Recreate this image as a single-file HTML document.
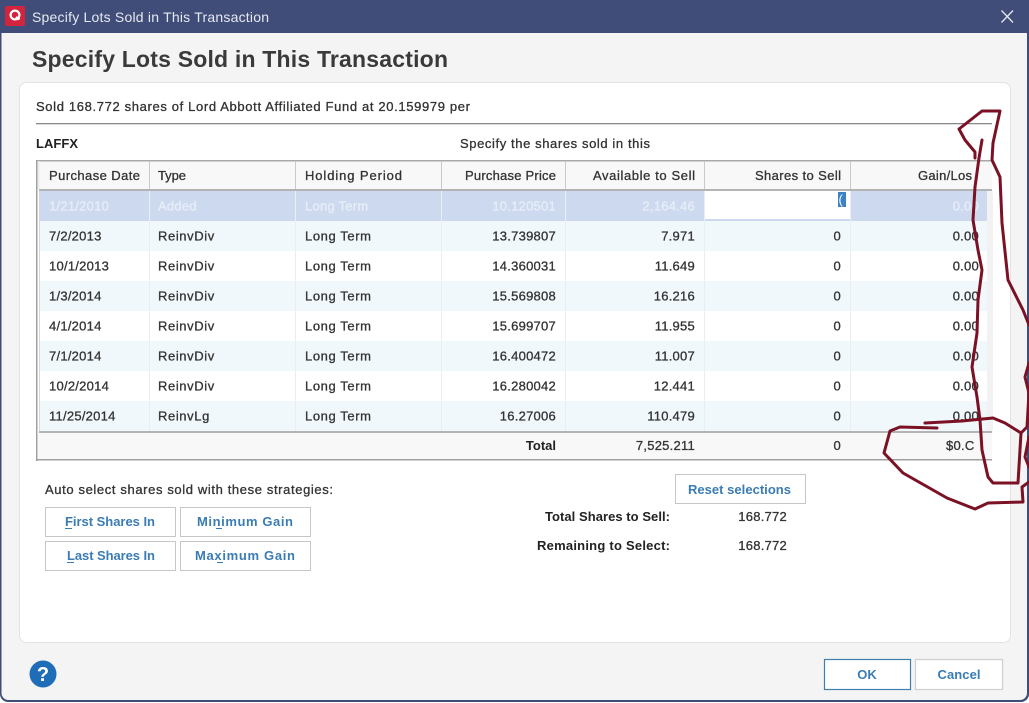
<!DOCTYPE html>
<html>
<head>
<meta charset="utf-8">
<title>Specify Lots Sold in This Transaction</title>
<style>
html,body{margin:0;padding:0;background:#fff;}
svg{display:block;font-family:"Liberation Sans",sans-serif;font-size:13px;}
.soft{filter:blur(.3px);}
.t{fill:#333;stroke:#333;stroke-width:.3px;letter-spacing:.25px;}
.m{letter-spacing:.6px;}
.h{fill:#333;stroke:#333;stroke-width:.3px;}
.e{text-anchor:end;}
.w{fill:#e6edf7;stroke:#e6edf7;stroke-width:.4px;letter-spacing:.25px;}
.b{fill:#3a7cb4;font-weight:bold;}
.k{font-weight:bold;fill:#222;}
.sep{stroke:#e9eef2;stroke-width:1;}
.hs{stroke:#c9c9c9;stroke-width:1;}
.btn{fill:#fff;stroke:#c6c6c6;stroke-width:1;}
.ink{fill:none;stroke:#7b1124;stroke-width:3;stroke-linejoin:round;stroke-linecap:round;}
</style>
</head>
<body>
<svg width="1029" height="703" viewBox="0 0 1029 703" xmlns="http://www.w3.org/2000/svg">
<g class="soft">
<rect width="1029" height="703" fill="#fff"/>
<path d="M0 0H1029V694a8 8 0 0 1-8 8H8a8 8 0 0 1-8-8Z" fill="#3f4d78"/>
<path d="M1.500 33H1027V693a7 7 0 0 1-7 7H8.500a7 7 0 0 1-7-7Z" fill="#f4f4f4"/>

<rect x="5" y="6" width="20" height="20" rx="2" fill="#d3243f"/>
<circle cx="15" cy="15" r="4.400" fill="none" stroke="#fff" stroke-width="2.200"/>
<path d="M16 17l3.500 2.500" stroke="#fff" stroke-width="2.200"/>
<text x="32" y="22" font-size="14" fill="#e6e9f1" textLength="237">Specify Lots Sold in This Transaction</text>
<path d="M1001.500 10.500l11.500 12M1013 10.500l-11.500 12" stroke="#e6e9f1" stroke-width="1.300" fill="none"/>

<text x="32" y="67" font-size="23" font-weight="bold" fill="#3a3a3a" textLength="416">Specify Lots Sold in This Transaction</text>

<rect x="19.500" y="82.500" width="991" height="560" rx="7" fill="#fff" stroke="#e3e3e3"/>

<text x="36" y="111" class="h" textLength="434">Sold 168.772 shares of Lord Abbott Affiliated Fund at 20.159979 per</text>
<rect x="36" y="123" width="956" height="1.300" fill="#8a8a8a"/>
<text x="36" y="148" font-weight="bold" fill="#222" textLength="42">LAFFX</text>
<text x="460" y="148" class="h" textLength="190">Specify the shares sold in this</text>

<!-- table -->
<rect x="37" y="160" width="955" height="300" fill="#fff"/>
<rect x="37" y="161" width="955" height="28" fill="#f8f8f8"/>
<rect x="36" y="160" width="956" height="1.500" fill="#a8a8a8"/>
<rect x="36" y="160" width="1.500" height="301" fill="#a0a0a0"/>
<rect x="38" y="161" width="1.500" height="28" fill="#ececec"/>
<rect x="39" y="189" width="953" height="2" fill="#b4b4b4"/>

<rect x="40" y="191" width="947" height="30" fill="#ccd9ee"/>
<rect x="40" y="221" width="947" height="30" fill="#f1f8fc"/>
<rect x="40" y="281" width="947" height="30" fill="#f1f8fc"/>
<rect x="40" y="341" width="947" height="30" fill="#f1f8fc"/>
<rect x="40" y="401" width="947" height="30" fill="#f1f8fc"/>
<rect x="39" y="191" width="1" height="240" fill="#d8d8d8"/>
<rect x="987" y="191" width="6" height="240" fill="#f2f2f2"/>

<line class="hs" x1="149.500" y1="161" x2="149.500" y2="189"/>
<line class="hs" x1="295.500" y1="161" x2="295.500" y2="189"/>
<line class="hs" x1="441.500" y1="161" x2="441.500" y2="189"/>
<line class="hs" x1="565.500" y1="161" x2="565.500" y2="189"/>
<line class="hs" x1="704.500" y1="161" x2="704.500" y2="189"/>
<line class="hs" x1="850.500" y1="161" x2="850.500" y2="189"/>

<line class="sep" x1="149.500" y1="191" x2="149.500" y2="431"/>
<line class="sep" x1="295.500" y1="191" x2="295.500" y2="431"/>
<line class="sep" x1="441.500" y1="191" x2="441.500" y2="431"/>
<line class="sep" x1="565.500" y1="191" x2="565.500" y2="431"/>
<line class="sep" x1="704.500" y1="191" x2="704.500" y2="431"/>
<line class="sep" x1="850.500" y1="191" x2="850.500" y2="431"/>

<text x="49" y="180" class="h" textLength="91">Purchase Date</text>
<text x="158" y="180" class="h" textLength="28">Type</text>
<text x="305" y="180" class="h" textLength="97">Holding Period</text>
<text x="465" y="180" class="h" textLength="91">Purchase Price</text>
<text x="593" y="180" class="h" textLength="102">Available to Sell</text>
<text x="755" y="180" class="h" textLength="86">Shares to Sell</text>
<text x="918" y="180" class="h" textLength="54">Gain/Los</text>

<!-- row 1 selected -->
<text x="49" y="210.500" class="w">1/21/2010</text>
<text x="158" y="210.500" class="w">Added</text>
<text x="305" y="210.500" class="w m">Long Term</text>
<text x="556" y="210.500" class="w e">10.120501</text>
<text x="695" y="210.500" class="w e">2,164.46</text>
<rect x="705" y="191" width="145" height="28" fill="#fff"/>
<rect x="838" y="192" width="8" height="15" fill="#3c82c4"/>
<text x="838.500" y="204" fill="#fff">(</text>
<text x="979" y="210.500" class="w e">0.00</text>

<text x="49" y="240.500" class="t">7/2/2013</text><text x="158" y="240.500" class="t m">ReinvDiv</text><text x="305" y="240.500" class="t m">Long Term</text><text x="556" y="240.500" class="t e">13.739807</text><text x="695" y="240.500" class="t e">7.971</text><text x="841" y="240.500" class="t e">0</text><text x="979" y="240.500" class="t e">0.00</text>
<text x="49" y="270.500" class="t">10/1/2013</text><text x="158" y="270.500" class="t m">ReinvDiv</text><text x="305" y="270.500" class="t m">Long Term</text><text x="556" y="270.500" class="t e">14.360031</text><text x="695" y="270.500" class="t e">11.649</text><text x="841" y="270.500" class="t e">0</text><text x="979" y="270.500" class="t e">0.00</text>
<text x="49" y="300.500" class="t">1/3/2014</text><text x="158" y="300.500" class="t m">ReinvDiv</text><text x="305" y="300.500" class="t m">Long Term</text><text x="556" y="300.500" class="t e">15.569808</text><text x="695" y="300.500" class="t e">16.216</text><text x="841" y="300.500" class="t e">0</text><text x="979" y="300.500" class="t e">0.00</text>
<text x="49" y="330.500" class="t">4/1/2014</text><text x="158" y="330.500" class="t m">ReinvDiv</text><text x="305" y="330.500" class="t m">Long Term</text><text x="556" y="330.500" class="t e">15.699707</text><text x="695" y="330.500" class="t e">11.955</text><text x="841" y="330.500" class="t e">0</text><text x="979" y="330.500" class="t e">0.00</text>
<text x="49" y="360.500" class="t">7/1/2014</text><text x="158" y="360.500" class="t m">ReinvDiv</text><text x="305" y="360.500" class="t m">Long Term</text><text x="556" y="360.500" class="t e">16.400472</text><text x="695" y="360.500" class="t e">11.007</text><text x="841" y="360.500" class="t e">0</text><text x="979" y="360.500" class="t e">0.00</text>
<text x="49" y="390.500" class="t">10/2/2014</text><text x="158" y="390.500" class="t m">ReinvDiv</text><text x="305" y="390.500" class="t m">Long Term</text><text x="556" y="390.500" class="t e">16.280042</text><text x="695" y="390.500" class="t e">12.441</text><text x="841" y="390.500" class="t e">0</text><text x="979" y="390.500" class="t e">0.00</text>
<text x="49" y="420.500" class="t">11/25/2014</text><text x="158" y="420.500" class="t m">ReinvLg</text><text x="305" y="420.500" class="t m">Long Term</text><text x="556" y="420.500" class="t e">16.27006</text><text x="695" y="420.500" class="t e">110.479</text><text x="841" y="420.500" class="t e">0</text><text x="979" y="420.500" class="t e">0.00</text>

<!-- totals -->
<rect x="38" y="433" width="954" height="26" fill="#f8f8f8"/>
<rect x="39" y="431" width="953" height="2" fill="#b4b4b4"/>
<rect x="36" y="459" width="956" height="1.500" fill="#a0a0a0"/>
<text x="556" y="450" class="e k">Total</text>
<text x="695" y="450" class="t e">7,525.211</text>
<text x="841" y="450" class="t e">0</text>
<text x="946" y="450" class="t">$0.C</text>

<!-- strategies -->
<text x="45" y="494" class="h" textLength="288">Auto select shares sold with these strategies:</text>
<rect class="btn" x="45.500" y="507.500" width="130" height="29"/>
<rect class="btn" x="180.500" y="507.500" width="130" height="29"/>
<rect class="btn" x="45.500" y="541.500" width="130" height="29"/>
<rect class="btn" x="180.500" y="541.500" width="130" height="29"/>
<text x="65" y="526" class="b" textLength="90">First Shares In</text>
<text x="197" y="526" class="b" textLength="96">Minimum Gain</text>
<text x="67" y="560" class="b" textLength="88">Last Shares In</text>
<text x="195" y="560" class="b" textLength="100">Maximum Gain</text>
<path d="M65 528.500h7M216 528.500h6M67 562.500h7M217 562.500h6M687 496.500h8" stroke="#3a7cb4" stroke-width="1" fill="none"/>

<rect class="btn" x="675.500" y="474.500" width="130" height="29"/>
<text x="688" y="494" class="b" textLength="103">Reset selections</text>

<text x="670" y="521" class="e k" textLength="125">Total Shares to Sell:</text>
<text x="670" y="550" class="e k" textLength="133">Remaining to Select:</text>
<text x="787" y="521" class="t e">168.772</text>
<text x="787" y="550" class="t e">168.772</text>

<!-- footer -->
<circle cx="43" cy="674" r="13.500" fill="#1f6cb7"/>
<text x="43" y="681" text-anchor="middle" font-size="20" font-weight="bold" fill="#fff">?</text>
<rect x="824.500" y="659.500" width="86" height="30" fill="#fff" stroke="#3d80ad" stroke-width="1.200"/>
<rect x="915.500" y="659.500" width="87" height="30" fill="#fff" stroke="#cfcfcf" stroke-width="1.200"/>
<text x="867" y="679" text-anchor="middle" class="b">OK</text>
<text x="959" y="679" text-anchor="middle" class="b" textLength="43">Cancel</text>

<!-- red ink annotation -->
<path class="ink" d="M982 140L979 158L975 187L973 220L978 250L982 270L978 300L977 333L972 367L977 397L980 420L982 450L988 477L993 483L1018 483L1021 433L1005 423L993 418L962 421L925 423"/>
<path class="ink" d="M937 428L900 427L890 431L884 453L903 473L947 498L975 509L988 503L1023 502L1022 487L1029 482"/>
<path class="ink" d="M975 158L975 152L965 140L959 129L982 111L1000 111L993 143L992 160L1000 177L1002 223L1008 280L1023 310L1029 325"/>
<path class="ink" d="M1029 363L1025 377L1029 393L1027 427L1021 433M1029 437L1025 457L1029 467"/>
</g>
</svg>
</body>
</html>
